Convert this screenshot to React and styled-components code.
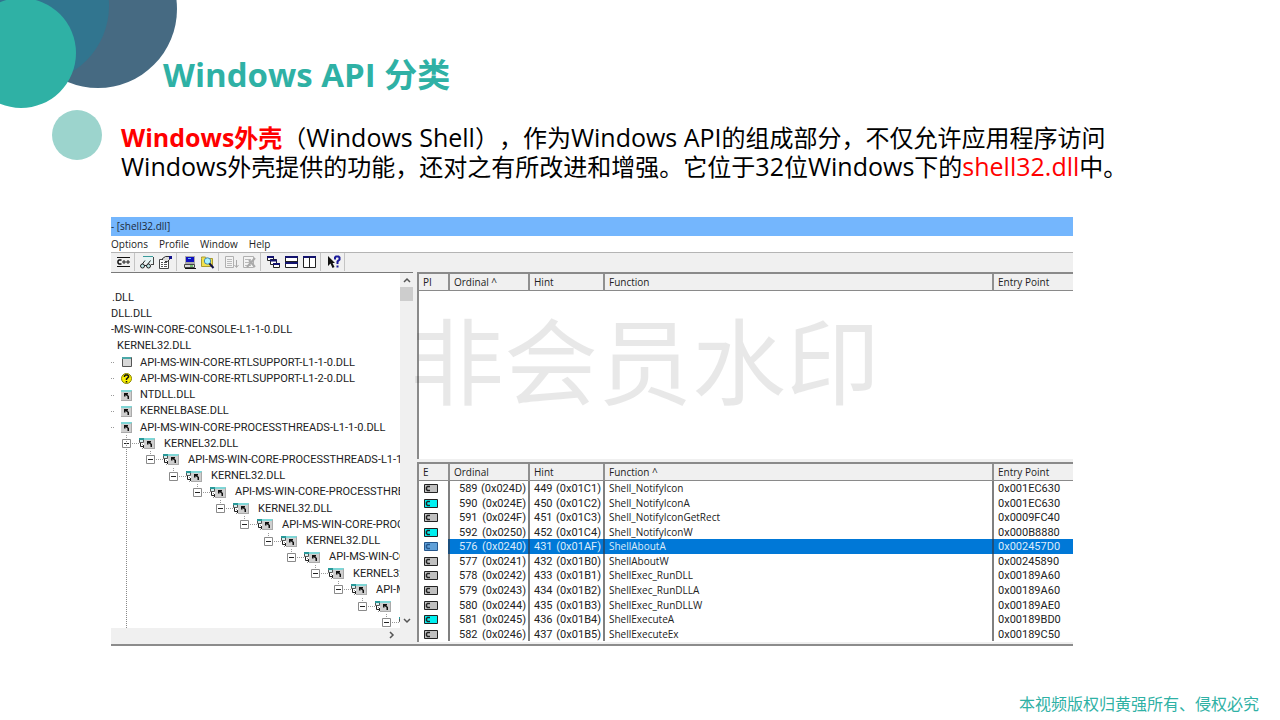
import React from 'react';
import styled, { createGlobalStyle, css } from 'styled-components';

const GlobalStyle = createGlobalStyle`
  *, *::before, *::after { box-sizing: border-box; }
  body { margin: 0; background: #fff; }
  button { font: inherit; color: inherit; background: none; border: 0; padding: 0; }
`;

const Slide = styled.main`
  position: relative;
  display: flex;
  flex-direction: column;
  min-height: 100vh;
  overflow: hidden;
  font-family: 'Open Sans', 'Noto Sans', 'Noto Sans CJK SC', sans-serif;
  color: #000;
  text-spacing-trim: space-all;
`;

const Bubbles = styled.svg`
  position: absolute;
  left: 0;
  top: 0;
`;

const Title = styled.h1`
  margin: 51px 0 0 163px;
  font-size: 33px;
  line-height: 48px;
  font-weight: 700;
  color: #2fb1a5;
`;

const Intro = styled.p`
  margin: 24px 0 0 121px;
  font-size: 24px;
  line-height: 29px;
`;

const Line = styled.span`
  display: block;
  height: 29px;
  white-space: nowrap;
`;

const Latin = styled.span`
  font-size: 25px;
`;

const Key = styled.span`
  color: #f00;
  font-weight: ${(p) => (p.$strong ? 700 : 400)};
`;

const Footer = styled.footer`
  margin-top: auto;
  padding: 0 21px 4px;
  text-align: right;
  font-size: 16px;
  line-height: 24px;
  color: #2fb1a5;
`;

const Viewer = styled.section`
  position: relative;
  margin: 36px 207px 0 111px;
  padding-bottom: 2px;
  border-bottom: 2px solid #8c8c8c;
  background: #f0f0f0;
  font-family: 'Open Sans', sans-serif;
  font-size: 10px;
  line-height: 14px;
  color: #222;
`;

const TitleBar = styled.header`
  height: 19px;
  line-height: 19px;
  background: #74b6fd;
  color: #1c2a3a;
`;

const MenuBar = styled.nav`
  display: flex;
  gap: 11px;
  height: 16px;
  background: #fff;
  line-height: 16px;
`;

const Toolbar = styled.div`
  display: flex;
  align-items: flex-start;
  height: 20px;
  border-top: 1px solid #b4b4b4;
`;

const ToolGroup = styled.div`
  display: flex;
  align-items: center;
  gap: 2px;
  height: 18px;
  padding: 0 3px 0 4px;
  border-right: 1px solid #c4c4c4;
`;

const ToolButton = styled.button`
  display: flex;
  width: 16px;
  height: 16px;
`;

const Panes = styled.div`
  display: grid;
  grid-template-columns: 302px 1fr;
  gap: 4px;
  height: 370px;
`;

const TreePane = styled.div`
  display: grid;
  grid-template-columns: 1fr 13px;
  grid-template-rows: 1fr 14px;
  border-top: 1px solid #7a7a7a;
  overflow: hidden;
`;

const TreeView = styled.div`
  position: relative;
  overflow: hidden;
  padding-top: 16px;
  background: #fff;
`;

const Tree = styled.ul`
  display: grid;
  grid-auto-rows: 1fr;
  height: 341px;
  margin: 0;
  padding: 0;
  list-style: none;
  font-family: Roboto, 'Open Sans', sans-serif;
  font-size: 11px;
`;

const Node = styled.li`
  display: flex;
  align-items: center;
  padding-left: ${(p) => p.$indent}px;
  white-space: nowrap;
`;

const NodeName = styled.span`
  padding-top: 1px;
  padding-left: ${(p) => (p.$gap ? 8 : 0)}px;
`;

const TrunkLine = styled.div`
  position: absolute;
  left: 15px;
  top: 168px;
  bottom: 0;
  border-left: 1px dotted #888;
`;

const Expander = styled.button`
  display: flex;
  width: 10px;
  height: 16px;
`;

const VScroll = styled.div`
  display: flex;
  flex-direction: column;
  align-items: center;
  justify-content: space-between;
`;

const Thumb = styled.div`
  width: 13px;
  height: 14px;
  margin-bottom: auto;
  background: #cdcdcd;
`;

const HScroll = styled.div`
  display: flex;
  align-items: center;
  justify-content: flex-end;
  padding-right: 2px;
`;

const ScrollButton = styled.button`
  display: flex;
  align-items: center;
  justify-content: center;
  width: 12px;
  height: 14px;
`;

const Lists = styled.div`
  display: grid;
  grid-template-rows: 187px 1fr;
  gap: 3px;
  min-width: 0;
`;

const ListPane = styled.div`
  border-top: 2px solid #8a8a8a;
  border-left: 2px solid #8a8a8a;
  background: #fff;
`;

const Table = styled.table`
  width: 100%;
  table-layout: fixed;
  border-collapse: separate;
  border-spacing: 0;
`;

const Th = styled.th`
  width: ${(p) => p.$width};
  height: 17px;
  padding: 0 0 0 4px;
  border-left: ${(p) => (p.$first ? 0 : 2)}px solid #909090;
  border-bottom: 1px solid #8a8a8a;
  background: #f0f0f0;
  text-align: left;
  font-weight: 400;
  line-height: 16px;
`;

const Rows = styled.tbody`
  height: 160px;
`;

const Td = styled.td`
  padding: 0 0 0 ${(p) => p.$pad}px;
  border-left: ${(p) => (p.$first ? 0 : 2)}px solid #808080;
  line-height: 14px;
  white-space: nowrap;
  vertical-align: middle;
  ${(p) =>
    p.$numeric &&
    css`
      padding-top: 1px;
      padding-right: 2px;
      font-family: Roboto, 'Open Sans', sans-serif;
      font-size: 11px;
      line-height: 13px;
    `}
  ${(p) =>
    p.$selected &&
    css`
      background: #0078d7;
      color: #dcecfb;
      border-left-color: #1c4f7c;
    `}
`;

const Pair = styled.span`
  display: flex;
  justify-content: space-between;
`;

const Watermark = styled.div`
  position: absolute;
  left: 299px;
  top: 70px;
  font-family: 'Noto Sans CJK SC', sans-serif;
  font-size: 94px;
  line-height: 140px;
  color: rgba(0, 0, 0, 0.09);
  white-space: nowrap;
  pointer-events: none;
`;

const icons = {
  cpp: (
    <>
      <path d="M2 3.500h13M2 12.500h13" stroke="#111" />
      <path d="M6.500 6H4L3 7v2l1 1h2.500" stroke="#111" strokeWidth="1.500" fill="none" />
      <path d="M7 8h4M9 6v4M11 8h4M13 6v4" stroke="#222" fill="none" />
    </>
  ),
  view: (
    <>
      <path d="M4 3h10v6H4z" fill="#e6f4f4" />
      <path d="M4 2.500h10" stroke="#3a9a9a" />
      <path d="M14.500 3v8M12 10.500h2" stroke="#444" />
      <path d="M3 10.500 6 6.500M8.500 10.500l3-4M5 11.500h4" stroke="#222" fill="none" />
      <circle cx="3.500" cy="12" r="2" stroke="#222" fill="#bfe8e8" />
      <circle cx="9.500" cy="12" r="2" stroke="#222" fill="#bfe8e8" />
    </>
  ),
  properties: (
    <>
      <path d="M2.500 5.500h9v9h-9z" fill="#fff" stroke="#444" />
      <path d="M4 8.500h2M7 8.500h3M4 10.500h2M7 10.500h3M4 12.500h2M7 12.500h3" stroke="#555" />
      <path d="M5.500 6V4.500l3-2h4v3l-2 2H8" fill="#ddd" stroke="#333" />
      <path d="M12 2h3v3h-3z" fill="#13138a" />
    </>
  ),
  system: (
    <>
      <path d="M4 2h10v8H4z" fill="#aaa" />
      <path d="M5 3h8v5H5z" fill="#1010c0" />
      <path d="M7 4.500h3" stroke="#6bf" />
      <path d="M3.500 10.500h10v3h-10z" fill="#ddd" stroke="#444" />
      <path d="M4 14.500h11" stroke="#111" />
      <path d="M9 12h3" stroke="#1a1" />
    </>
  ),
  search: (
    <>
      <path d="M2.500 4.500V3h4l1 1.500h6v8h-11z" fill="#f2e04c" stroke="#a89a30" />
      <circle cx="8.500" cy="7" r="3.200" fill="#a8f2ff" stroke="#48a" />
      <path d="m10.500 9.500 4 4.500" stroke="#114" strokeWidth="2" />
    </>
  ),
  expand: (
    <>
      <path d="M2.500 2.500h8v11h-8z" fill="#f4f4f4" stroke="#b0b0b0" />
      <path d="M4 5.500h5M4 7.500h5M4 9.500h5M4 11.500h5" stroke="#bbb" />
      <path d="M13.500 6v7M11.500 11l2 2.500 2-2.500" stroke="#aaa" fill="none" />
    </>
  ),
  collapse: (
    <>
      <path d="M2.500 2.500h10v11h-10z" fill="#f4f4f4" stroke="#b0b0b0" />
      <path d="M4 5.500h6M4 8.500h6M4 11.500h6" stroke="#bbb" />
      <path d="m6 13 8-9M8 6l6 7" stroke="#aaa" strokeWidth="2" />
    </>
  ),
  cascade: (
    <>
      <path d="M2.500 2.500h6v4h-6z" fill="#fff" stroke="#222" />
      <path d="M5.500 5.500h6v5h-6z" fill="#fff" stroke="#222" />
      <path d="M8.500 9.500h6v4h-6z" fill="#fff" stroke="#222" />
      <path d="M2 3h7M5 6.500h7M8 10h7" stroke="#13136e" strokeWidth="2" />
    </>
  ),
  horizontal: (
    <>
      <path d="M2.500 2.500h12v11h-12z" fill="#fff" stroke="#222" />
      <path d="M2 3h13M2 9h13" stroke="#13136e" strokeWidth="2" />
      <path d="M2 7.500h13" stroke="#222" />
    </>
  ),
  vertical: (
    <>
      <path d="M2.500 2.500h12v11h-12z" fill="#fff" stroke="#222" />
      <path d="M2 3h13" stroke="#13136e" strokeWidth="2" />
      <path d="M8.500 3v10" stroke="#222" />
    </>
  ),
  help: (
    <>
      <path d="M3 2v10l2.500-2.500L7.500 14l2-1-2-4H10z" fill="#111" />
      <path d="M10 5.500V3.500L11 2.500h2.500l1 1v2l-2 2V10M12.500 11.500v2" fill="none" stroke="#1a1a9a" strokeWidth="2" />
    </>
  ),
};

const toolGroups = [
  [['cpp', 'Undecorate C++ functions']],
  [['view', 'View full paths'], ['properties', 'Properties']],
  [['system', 'System information'], ['search', 'Configure search order']],
  [['expand', 'Expand all'], ['collapse', 'Collapse all']],
  [['cascade', 'Cascade'], ['horizontal', 'Tile horizontally'], ['vertical', 'Tile vertically']],
  [['help', 'Help']],
];

function ModuleShape() {
  return (
    <>
      <path d="M0 3h11v11H0z" fill="#cfcfcf" />
      <path d="M0 3h11v2H0z" fill="#7fd6d6" />
      <path d="M10.500 4v10M0 13.500h11" stroke="#aaa" />
      <path d="M3 6h4v1.500H6L8 9v3H6.500V9.500L4.500 8v1.500H3z" fill="#111" />
    </>
  );
}

function LeafIcon({ kind }) {
  return (
    <svg width="21" height="16" aria-hidden="true">
      <path d="M0 8.500h4" stroke="#999" strokeDasharray="1 1" />
      {kind === 'module' && <g transform="translate(10)"><ModuleShape /></g>}
      {kind === 'plain' && (
        <>
          <path d="M11.500 3.500h9v9h-9z" fill="#d8d8d8" stroke="#555" />
          <path d="M11 4h9" stroke="#4aa8a8" strokeWidth="2" />
        </>
      )}
      {kind === 'missing' && (
        <>
          <circle cx="15.500" cy="8.500" r="5" fill="#f8ee00" stroke="#8a8300" />
          <path d="M13.500 7V6l1-1h2l1 1v1l-2 2v1M15.500 11v1.500" fill="none" stroke="#111" strokeWidth="1.500" />
        </>
      )}
    </svg>
  );
}

function BranchIcon() {
  return (
    <svg width="24" height="16" aria-hidden="true">
      <path d="M0 8.500h8" stroke="#999" strokeDasharray="1 1" />
      <path d="M7.500 3.500h4v4h-4z" fill="#d8eeee" stroke="#555" />
      <path d="M7 4h5" stroke="#2a9a9a" strokeWidth="2" />
      <path d="M8.500 8v3.500H12M10.500 9.500l2 2-2 2" fill="none" stroke="#222" />
      <g transform="translate(12)"><ModuleShape /></g>
    </svg>
  );
}

const ExportSvg = styled.svg`
  display: block;
`;

function ExportIcon({ tone }) {
  const fill = { grey: '#c0c0c0', cyan: '#00f0f0', blue: '#60a0d8' }[tone];
  const ink = tone === 'blue' ? '#24568c' : '#222';
  return (
    <ExportSvg width="16" height="12" aria-hidden="true">
      <path d="M1.500 2.500h13v8h-13z" fill={fill} stroke={ink} />
      <path d="M7 4.500H4.500L3.500 5.500v2l1 1H7" fill="none" stroke={ink} strokeWidth="1.500" />
    </ExportSvg>
  );
}

const P = 'API-MS-WIN-CORE-PROCESSTHREADS-L1-1-0.DLL';
const K = 'KERNEL32.DLL';

const tree = [
  { name: '.DLL', indent: 1 },
  { name: 'DLL.DLL', indent: 0 },
  { name: '-MS-WIN-CORE-CONSOLE-L1-1-0.DLL', indent: 0 },
  { name: K, indent: 6 },
  { name: 'API-MS-WIN-CORE-RTLSUPPORT-L1-1-0.DLL', leaf: 'plain' },
  { name: 'API-MS-WIN-CORE-RTLSUPPORT-L1-2-0.DLL', leaf: 'missing' },
  { name: 'NTDLL.DLL', leaf: 'module' },
  { name: 'KERNELBASE.DLL', leaf: 'module' },
  { name: P, leaf: 'module' },
  ...[K, P, K, P, K, P, K, P, K, P, '', ''].map((name, level) => ({ name, level })),
];

const exportsList = [
  ['grey', '589', '024D', '449', '01C1', 'Shell_NotifyIcon', '001EC630'],
  ['cyan', '590', '024E', '450', '01C2', 'Shell_NotifyIconA', '001EC630'],
  ['grey', '591', '024F', '451', '01C3', 'Shell_NotifyIconGetRect', '0009FC40'],
  ['cyan', '592', '0250', '452', '01C4', 'Shell_NotifyIconW', '000B8880'],
  ['blue', '576', '0240', '431', '01AF', 'ShellAboutA', '002457D0'],
  ['grey', '577', '0241', '432', '01B0', 'ShellAboutW', '00245890'],
  ['grey', '578', '0242', '433', '01B1', 'ShellExec_RunDLL', '00189A60'],
  ['grey', '579', '0243', '434', '01B2', 'ShellExec_RunDLLA', '00189A60'],
  ['grey', '580', '0244', '435', '01B3', 'ShellExec_RunDLLW', '00189AE0'],
  ['cyan', '581', '0245', '436', '01B4', 'ShellExecuteA', '00189BD0'],
  ['grey', '582', '0246', '437', '01B5', 'ShellExecuteEx', '00189C50'],
];

function ListHead({ labels }) {
  const widths = ['29px', '80px', '75px', 'auto', '81px'];
  return (
    <thead>
      <tr>
        {labels.map((label, i) => (
          <Th key={label} scope="col" $first={i === 0} $width={widths[i]}>{label}</Th>
        ))}
      </tr>
    </thead>
  );
}

function TreeNode({ node }) {
  if (node.level !== undefined) {
    return (
      <Node $indent={11 + Math.round((node.level * 118) / 5)}>
        <Expander aria-label="Collapse">
          <svg width="10" height="16" aria-hidden="true">
            <path d="M4.500 0v4" stroke="#999" strokeDasharray="1 1" />
            <path d="M.5 4.500h8v8h-8z" fill="#fff" stroke="#8a8a8a" />
            <path d="M2 8.500h5" stroke="#222" />
          </svg>
        </Expander>
        <BranchIcon />
        <NodeName $gap>{node.name}</NodeName>
      </Node>
    );
  }
  return (
    <Node $indent={node.indent || 0}>
      {node.leaf && <LeafIcon kind={node.leaf} />}
      <NodeName $gap={node.leaf}>{node.name}</NodeName>
    </Node>
  );
}

function NumberPair({ value, hex }) {
  return (
    <Pair>
      <span>{value}</span>
      <span>{`(0x${hex})`}</span>
    </Pair>
  );
}

function Chevron({ d }) {
  return (
    <svg width="8" height="8" aria-hidden="true">
      <path d={d} fill="none" stroke="#555" strokeWidth="1.500" />
    </svg>
  );
}

export default function App() {
  return (
    <Slide lang="zh-CN">
      <GlobalStyle />
      <Bubbles width="180" height="164" aria-hidden="true">
        <circle cx="98" cy="9" r="79" fill="#466a82" />
        <circle cx="32" cy="6" r="77" fill="#31758f" />
        <circle cx="21" cy="53" r="55" fill="#2fb1a5" />
        <circle cx="77" cy="135" r="25" fill="#9cd4cd" />
      </Bubbles>

      <Title>Windows API 分类</Title>
      <Intro>
        <Line>
          <Key $strong><Latin>Windows</Latin>外壳</Key>（<Latin>Windows Shell</Latin>），作为<Latin>Windows API</Latin>的组成部分，不仅允许应用程序访问
        </Line>
        <Line>
          <Latin>Windows</Latin>外壳提供的功能，还对之有所改进和增强。它位于<Latin>32</Latin>位<Latin>Windows</Latin>下的<Key><Latin>shell32.dll</Latin></Key>中。
        </Line>
      </Intro>

      <Viewer>
        <TitleBar>- [shell32.dll]</TitleBar>
        <MenuBar>
          {['Options', 'Profile', 'Window', 'Help'].map((m) => <button key={m}>{m}</button>)}
        </MenuBar>
        <Toolbar>
          {toolGroups.map((group) => (
            <ToolGroup key={group[0][0]}>
              {group.map(([icon, label]) => (
                <ToolButton key={icon} aria-label={label}>
                  <svg width="16" height="16" aria-hidden="true">{icons[icon]}</svg>
                </ToolButton>
              ))}
            </ToolGroup>
          ))}
        </Toolbar>

        <Panes>
          <TreePane>
            <TreeView>
              <Tree>{tree.map((node, i) => <TreeNode key={i} node={node} />)}</Tree>
              <TrunkLine />
            </TreeView>
            <VScroll>
              <ScrollButton aria-label="Scroll up"><Chevron d="M1 6l3-3 3 3" /></ScrollButton>
              <Thumb />
              <ScrollButton aria-label="Scroll down"><Chevron d="M1 2l3 3 3-3" /></ScrollButton>
            </VScroll>
            <HScroll>
              <ScrollButton aria-label="Scroll right"><Chevron d="M2 1l3 3-3 3" /></ScrollButton>
            </HScroll>
          </TreePane>

          <Lists>
            <ListPane>
              <Table><ListHead labels={['PI', 'Ordinal ^', 'Hint', 'Function', 'Entry Point']} /></Table>
            </ListPane>
            <ListPane>
              <Table>
                <ListHead labels={['E', 'Ordinal', 'Hint', 'Function ^', 'Entry Point']} />
                <Rows>
                  {exportsList.map(([tone, ord, ordHex, hint, hintHex, fn, entry]) => {
                    const selected = tone === 'blue';
                    return (
                      <tr key={ord}>
                        <Td $first $pad={4}><ExportIcon tone={tone} /></Td>
                        <Td $numeric $pad={9} $selected={selected}><NumberPair value={ord} hex={ordHex} /></Td>
                        <Td $numeric $pad={4} $selected={selected}><NumberPair value={hint} hex={hintHex} /></Td>
                        <Td $pad={4} $selected={selected}>{fn}</Td>
                        <Td $numeric $pad={4} $selected={selected}>{`0x${entry}`}</Td>
                      </tr>
                    );
                  })}
                </Rows>
              </Table>
            </ListPane>
          </Lists>
        </Panes>
        <Watermark>非会员水印</Watermark>
      </Viewer>

      <Footer>本视频版权归黄强所有、侵权必究</Footer>
    </Slide>
  );
}
